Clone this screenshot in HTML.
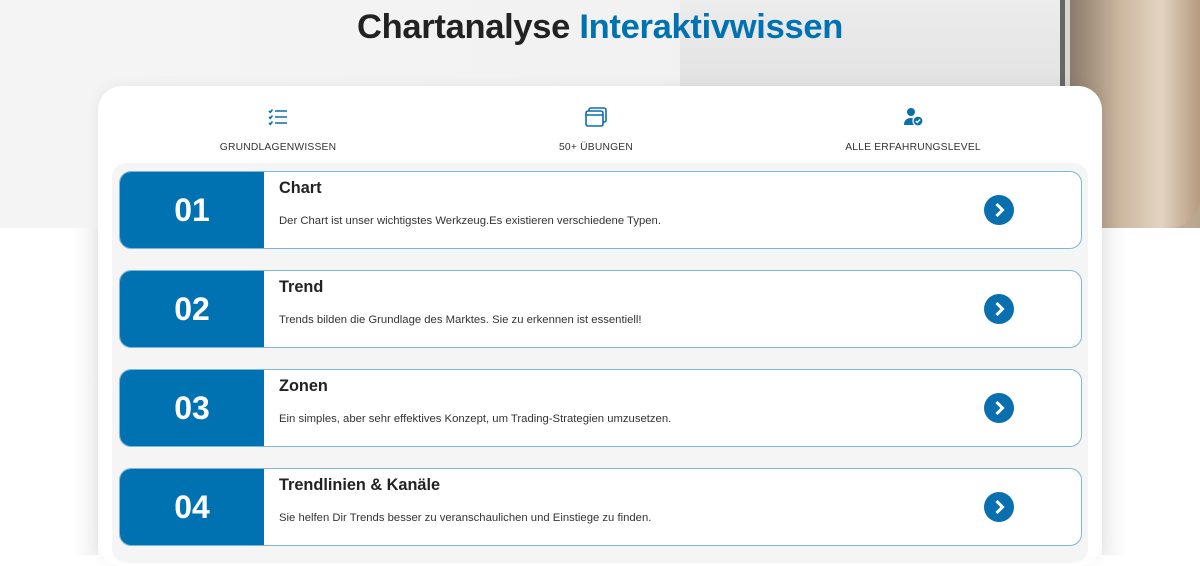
<!DOCTYPE html>
<html><head><meta charset="utf-8"><style>
*{margin:0;padding:0;box-sizing:border-box}
body{width:1200px;height:555px;overflow:hidden;background:#fff;font-family:"Liberation Sans",Arial,sans-serif;position:relative}
.top{position:absolute;left:0;top:0;width:1200px;height:228px;background:linear-gradient(90deg,#f4f4f4 0%,#f2f2f2 55%,#e9e9e9 70%,#e2e2e2 85%,#c9bfb3 95%,#b8a58e 100%)}
.chart{position:absolute;left:680px;top:0;width:385px;height:90px;background:linear-gradient(180deg,#ececec,#e2e2e2);border-right:5px solid #666}
.face{position:absolute;left:1070px;top:0;width:130px;height:228px;background:linear-gradient(90deg,#8a7a6a,#cdb8a0 40%,#e3d4c2 70%,#b49a80);border-bottom-right-radius:30px}
.side{position:absolute;left:73px;top:228px;width:25px;height:327px;background:linear-gradient(90deg,#fff,#f0f0f0)}
.side2{position:absolute;left:1102px;top:228px;width:25px;height:327px;background:linear-gradient(90deg,#f0f0f0,#fff)}
h1{position:absolute;top:8px;left:0;width:1200px;text-align:center;font-size:34.5px;font-weight:bold;color:#222;letter-spacing:-0.3px}
h1 span{color:#0072b1}
.card{position:absolute;left:98px;top:86px;width:1004px;height:480px;background:#fff;border-radius:24px;box-shadow:0 0 14px rgba(0,0,0,.06)}
.feat{position:absolute;top:107px;width:300px;text-align:center;font-size:10.3px;color:#333;letter-spacing:.2px}
.feat svg{display:block;margin:0 auto 15px}
.list{position:absolute;left:112px;top:163px;width:976px;height:400px;background:#f5f5f5;border-radius:14px}
.row{position:absolute;left:119px;width:963px;height:78px;background:#fff;border:1px solid #7fb6d8;border-radius:12px;overflow:hidden}
.num{position:absolute;left:0;top:0;width:144px;height:100%;background:#0072b1;color:#fff;font-size:32px;font-weight:bold;text-align:center;line-height:76px}
.t{position:absolute;left:159px;top:7px;font-size:16.3px;font-weight:bold;color:#222}
.d{position:absolute;left:159px;top:43px;font-size:11.3px;color:#333}
.go{position:absolute;left:864px;top:23px;width:30px;height:30px;border-radius:50%;background:#0a6fae}
.go svg{position:absolute;left:0;top:0}
</style></head><body>
<div class="top"></div><div class="chart"></div><div class="face"></div>
<div class="side"></div><div class="side2"></div>
<h1>Chartanalyse <span>Interaktivwissen</span></h1>
<div class="card"></div>
<div class="feat" style="left:128px"><svg width="20" height="20" viewBox="0 0 20 20"><g stroke="#0a6fae" stroke-width="1.6" fill="none"><path d="M1 4l1.3 1.3L4.5 2.5M1 10l1.3 1.3L4.5 8.5M1 16l1.3 1.3L4.5 14.5"/><path d="M7 4h12M7 10h12M7 16h12"/></g></svg>GRUNDLAGENWISSEN</div>
<div class="feat" style="left:446px"><svg width="22" height="20" viewBox="0 0 22 20"><g stroke="#0a6fae" stroke-width="1.6" fill="none"><rect x="4" y="1" width="17" height="14" rx="2"/><rect x="1" y="4" width="17" height="15" rx="2" fill="#fff"/><path d="M1 8h17"/></g></svg>50+ ÜBUNGEN</div>
<div class="feat" style="left:763px"><svg width="22" height="20" viewBox="0 0 22 20"><circle cx="9" cy="5" r="4" fill="#0a6fae"/><path d="M2 18c0-5 3-7 7-7 2 0 3 .5 4 1v6z" fill="#0a6fae"/><circle cx="16" cy="14" r="5" fill="#0a6fae" stroke="#fff" stroke-width="1.2"/><path d="M13.8 14l1.5 1.5 2.8-3" stroke="#fff" stroke-width="1.4" fill="none"/></svg>ALLE ERFAHRUNGSLEVEL</div>
<div class="list"></div>
<div class="row" style="top:171px"><div class="num">01</div><div class="t">Chart</div><div class="d">Der Chart ist unser wichtigstes Werkzeug.Es existieren verschiedene Typen.</div><div class="go"><svg width="30" height="30"><path d="M12.5 9l6 6-6 6" stroke="#fff" stroke-width="3" fill="none"/></svg></div></div>
<div class="row" style="top:270px"><div class="num">02</div><div class="t">Trend</div><div class="d">Trends bilden die Grundlage des Marktes. Sie zu erkennen ist essentiell!</div><div class="go"><svg width="30" height="30"><path d="M12.5 9l6 6-6 6" stroke="#fff" stroke-width="3" fill="none"/></svg></div></div>
<div class="row" style="top:369px"><div class="num">03</div><div class="t">Zonen</div><div class="d">Ein simples, aber sehr effektives Konzept, um Trading-Strategien umzusetzen.</div><div class="go"><svg width="30" height="30"><path d="M12.5 9l6 6-6 6" stroke="#fff" stroke-width="3" fill="none"/></svg></div></div>
<div class="row" style="top:468px"><div class="num">04</div><div class="t">Trendlinien &amp; Kanäle</div><div class="d">Sie helfen Dir Trends besser zu veranschaulichen und Einstiege zu finden.</div><div class="go"><svg width="30" height="30"><path d="M12.5 9l6 6-6 6" stroke="#fff" stroke-width="3" fill="none"/></svg></div></div>
</body></html>
